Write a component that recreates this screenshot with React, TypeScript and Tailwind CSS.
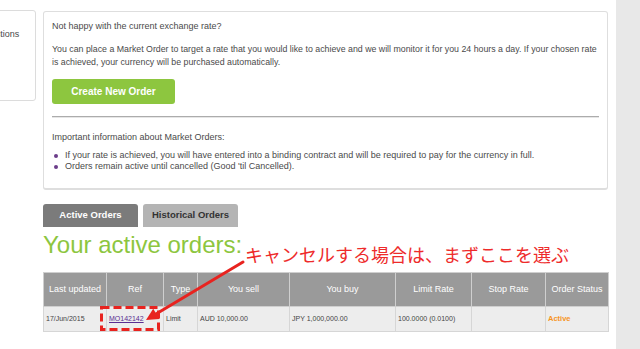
import React from "react";

const cols = [
  { label: "Last updated", w: "w-[63px]" },
  { label: "Ref", w: "w-[57px]" },
  { label: "Type", w: "w-[34px]" },
  { label: "You sell", w: "w-[92px]" },
  { label: "You buy", w: "w-[106px]" },
  { label: "Limit Rate", w: "w-[76px]" },
  { label: "Stop Rate", w: "w-[74px]" },
  { label: "Order Status", w: "w-[63px]" },
];

export default function App() {
  return (
    <div className="relative w-[640px] h-[349px] bg-white flex overflow-hidden font-['Liberation_Sans',Arial,sans-serif] text-[#4a4a4a]">
      {/* left cut-off panel */}
      <div className="w-[36px] shrink-0 pt-[10px]">
        <div className="-ml-[44px] w-[80px] h-[91px] border border-[#dcdcdc] rounded-[3px] pl-[11px] pt-[17px] text-[9px] leading-[13px] whitespace-nowrap">
          Transactions
        </div>
      </div>

      {/* main column */}
      <div className="w-[565px] ml-[7px] shrink-0 pt-[11px]">
        <div className="border border-[#dedede] border-b-2 rounded-[3px] pl-[8px] pr-[7px] pt-[8px] pb-[16px] text-[9px] leading-[13px]">
          <p>Not happy with the current exchange rate?</p>
          <p className="mt-[10px] text-[8.8px]">
            You can place a Market Order to target a rate that you would like to achieve and we will monitor it for you 24 hours a day. If your chosen rate is achieved, your currency will be purchased automatically.
          </p>
          <button className="mt-[10px] w-[123px] h-[25px] rounded-[3px] bg-[#8dc63f] text-white font-bold text-[10px] flex items-center justify-center">
            Create New Order
          </button>
          <div className="mt-[12px] mr-[1px] border-t border-[#acacac] border-b border-b-[#e6e6e6]" />
          <p className="mt-[13px]">Important information about Market Orders:</p>
          <ul className="mt-[6px] leading-[11px]">
            <li className="flex items-center">
              <span className="w-[4px] h-[4px] rounded-full bg-[#6b3d8a] ml-[2px] mr-[7px]" />
              If your rate is achieved, you will have entered into a binding contract and will be required to pay for the currency in full.
            </li>
            <li className="flex items-center">
              <span className="w-[4px] h-[4px] rounded-full bg-[#6b3d8a] ml-[2px] mr-[7px]" />
              Orders remain active until cancelled (Good 'til Cancelled).
            </li>
          </ul>
        </div>

        {/* tabs */}
        <div className="mt-[14px] flex gap-[5px] text-[9.5px] font-bold">
          <div className="w-[95px] h-[23px] rounded-t-[3px] bg-[#7b7b7b] text-white flex items-center justify-center">
            Active Orders
          </div>
          <div className="w-[95px] h-[23px] rounded-t-[3px] bg-[#b4b4b4] text-[#333] flex items-center justify-center">
            Historical Orders
          </div>
        </div>

        <h2 className="mt-[6px] text-[24px] leading-[24px] text-[#8dc63f] whitespace-nowrap">
          Your active orders:
        </h2>

        <table className="mt-[15px] w-[565px] border-collapse table-fixed">
          <thead>
            <tr className="h-[34px] bg-[#9a9a9a]">
              {cols.map((c) => (
                <th
                  key={c.label}
                  className={`${c.w} border border-[#cfcfcf] text-white text-[9px] font-normal text-center`}
                >
                  {c.label}
                </th>
              ))}
            </tr>
          </thead>
          <tbody>
            <tr className="h-[25px] bg-[#ededed] text-[7px] text-[#444]">
              <td className="border border-[#d6d6d6] pl-[2px]">17/Jun/2015</td>
              <td className="border border-[#d6d6d6] pl-[2px]">
                <span className="text-[#5a2d91] underline">MO142142</span>
              </td>
              <td className="border border-[#d6d6d6] pl-[2px]">Limit</td>
              <td className="border border-[#d6d6d6] pl-[2px]">AUD 10,000.00</td>
              <td className="border border-[#d6d6d6] pl-[2px]">JPY 1,000,000.00</td>
              <td className="border border-[#d6d6d6] pl-[2px]">100.0000 (0.0100)</td>
              <td className="border border-[#d6d6d6] pl-[2px]"></td>
              <td className="border border-[#d6d6d6] pl-[2px] font-bold text-[7.5px] text-[#f7941d]">Active</td>
            </tr>
          </tbody>
        </table>
      </div>

      {/* right grey column */}
      <div className="ml-[8px] flex-1 bg-[#e8e8e8]" />

      {/* annotation overlay */}
      <div className="absolute left-[245px] top-[245px] text-[18px] leading-[18px] text-[#ee2b2b] whitespace-nowrap font-['Noto_Sans_CJK_JP','Noto_Sans_CJK_SC',sans-serif]">
        キャンセルする場合は、まずここを選ぶ
      </div>
      <svg className="absolute left-0 top-0 pointer-events-none" width="640" height="349" viewBox="0 0 640 349">
        <line x1="243" y1="262" x2="156" y2="314" stroke="#e8231f" strokeWidth="3" strokeLinecap="round" />
        <polygon points="146,320 159.4,319 153.2,308.7" fill="#e8231f" />
        <rect x="101.5" y="307.5" width="57" height="22" fill="none" stroke="#e8231f" strokeWidth="3" strokeDasharray="8 4" />
      </svg>
    </div>
  );
}
